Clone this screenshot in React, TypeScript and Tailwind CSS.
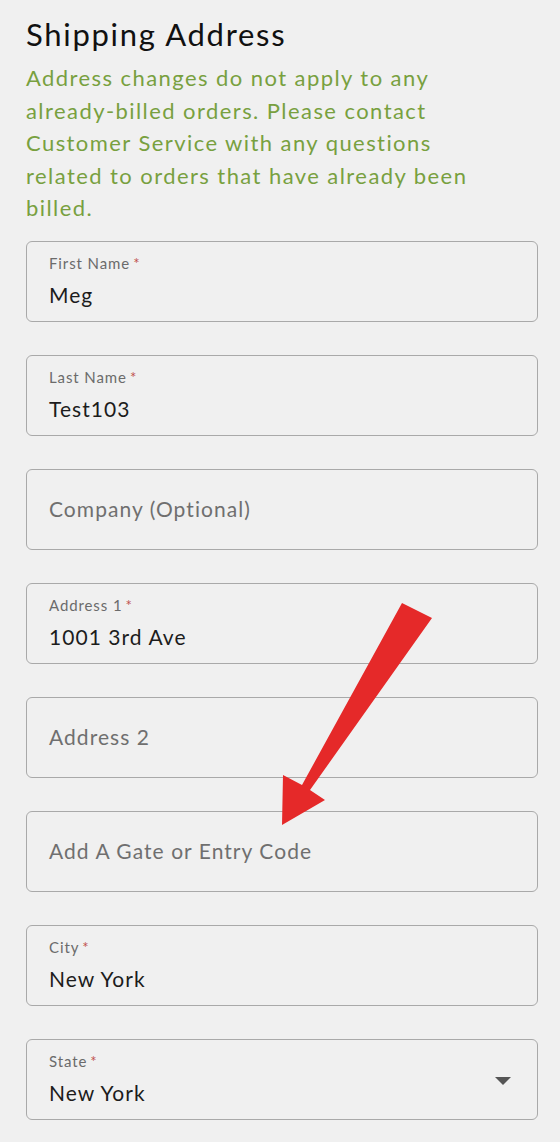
import React from "react";

type Field = {
  label: string;
  value?: string;
  required?: boolean;
  select?: boolean;
};

const fields: Field[] = [
  { label: "First Name", value: "Meg", required: true },
  { label: "Last Name", value: "Test103", required: true },
  { label: "Company (Optional)" },
  { label: "Address 1", value: "1001 3rd Ave", required: true },
  { label: "Address 2" },
  { label: "Add A Gate or Entry Code" },
  { label: "City", value: "New York", required: true },
  { label: "State", value: "New York", required: true, select: true },
];

function FieldBox({ field }: { field: Field }) {
  return (
    <div className="relative h-[81px] w-full rounded-[6px] border border-[#a9a9a9] pl-[22px] pr-[22px]">
      {field.value ? (
        <div className="flex flex-col pt-[12px]">
          <div className="text-[15px] leading-[18px] tracking-[0.06em] text-[#6b6b6b]">
            {field.label}
            {field.required && <span className="ml-[3px] text-[#c0504d]">*</span>}
          </div>
          <div className="mt-[10px] text-[21px] leading-[26px] tracking-[0.05em] text-[#1c1c1c]">
            {field.value}
          </div>
        </div>
      ) : (
        <div className="flex h-full items-center text-[21px] tracking-[0.05em] text-[#6f6f6f]">{field.label}</div>
      )}
      {field.select && (
        <svg className="absolute right-[26px] top-[37px]" width="16" height="8" viewBox="0 0 16 8">
          <path d="M0 0 H16 L8 8 Z" fill="#555555" />
        </svg>
      )}
    </div>
  );
}

export default function App() {
  return (
    <div
      className="relative min-h-[1142px] w-[560px] bg-[#f0f0f0] pl-[26px] pr-[22px] pt-[16px]"
      style={{ fontFamily: "Lato, 'Open Sans', sans-serif" }}
    >
      <h1 className="text-[31px] leading-[36px] tracking-[0.055em] text-[#111111]">Shipping Address</h1>
      <p className="mt-[10px] w-[476px] text-[22px] leading-[32.5px] tracking-[0.065em] text-[#78a03f]">
        Address changes do not apply to any already-billed orders. Please contact Customer Service with any
        questions related to orders that have already been billed.
      </p>
      <div className="mt-[16px] flex flex-col gap-[33px]">
        {fields.map((f) => (
          <FieldBox key={f.label} field={f} />
        ))}
      </div>
      <svg className="pointer-events-none absolute left-0 top-0" width="560" height="1142" viewBox="0 0 560 1142">
        <polygon
          points="402,603 432,618 310,790 325,800 282,825 283,775 302,785"
          fill="#e52929"
        />
      </svg>
    </div>
  );
}
